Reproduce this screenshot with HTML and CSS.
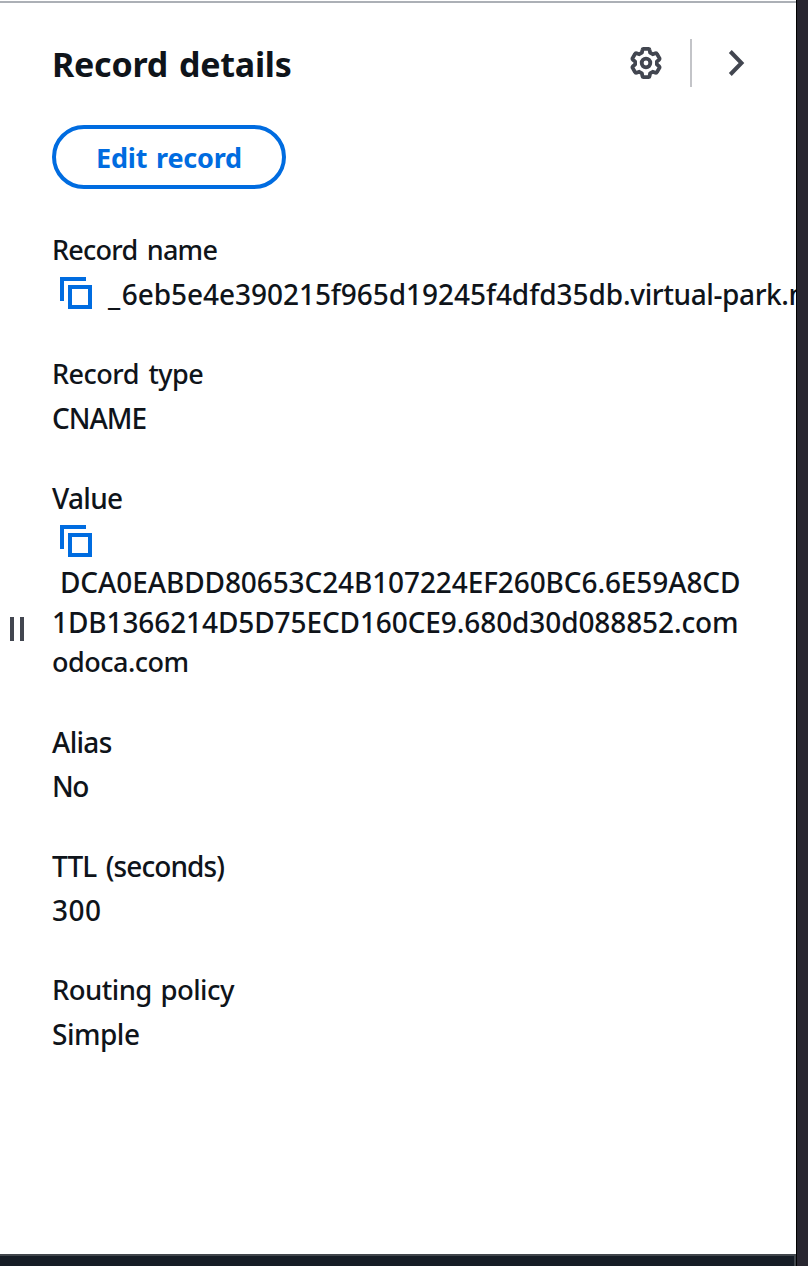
FILE: index.html
```
<!DOCTYPE html>
<html lang="en">
<head>
<meta charset="utf-8">
<title>Record details</title>
<link rel="stylesheet" href="styles.css">
</head>
<body>
<div class="screen">
  <div class="main">
    <aside class="panel">
      <div class="handle"><span class="grip"></span><span class="grip"></span></div>
      <div class="content">
        <header class="header">
          <h1 class="title">Record details</h1>
          <svg class="gear" viewBox="0 0 32 32"><path d="M13.4 1.9H18.6Q19.5 2 19.6 3L20.1 5.6 22.78 7.25 25.4 6.3Q26.5 6 27 7L29.4 11.1Q29.8 12 29.1 12.7L26.9 14.45V17.55L29.1 19.3Q29.8 20 29.4 20.9L27 25Q26.5 26 25.4 25.7L22.78 24.75 20.1 26.4 19.6 29Q19.5 30 18.6 30.1H13.4Q12.5 30 12.4 29L11.9 26.4 9.22 24.75 6.6 25.7Q5.5 26 5 25L2.6 20.9Q2.2 20 2.9 19.3L5.1 17.55V14.45L2.9 12.7Q2.2 12 2.6 11.1L5 7Q5.5 6 6.6 6.3L9.22 7.25 11.9 5.6 12.4 3Q12.5 2 13.4 1.9Z"/><circle cx="16" cy="16" r="4.3"/></svg>
          <span class="divider"></span>
          <svg class="chevron" viewBox="0 0 32 32"><path d="M10.3 4.5 21.5 16 10.3 27.5"/></svg>
        </header>
        <button class="edit">Edit record</button>
        <dl class="fields">
          <div class="field">
            <dt class="t-name">Record name</dt>
            <dd class="copyline"><svg class="copy" viewBox="0 0 32 32"><path d="M2 24V2H26"/><path d="M10 10H30V30H10Z"/></svg><span class="t-host"><span class="t-under">_</span>6eb5e4e390215f965d19245f4dfd35db<span class="t-domain">.virtual-park.n</span></span></dd>
          </div>
          <div class="field"><dt class="t-type">Record type</dt><dd class="t-cname">CNAME</dd></div>
          <div class="field">
            <dt class="t-value">Value</dt>
            <dd>
              <div class="copyline"><svg class="copy" viewBox="0 0 32 32"><path d="M2 24V2H26"/><path d="M10 10H30V30H10Z"/></svg></div>
              <div class="first t-v1">DCA0EABDD80653C24B107224EF260BC6.6E59A8CD</div>
              <div class="t-v2">1DB1366214D5D75ECD160CE9.680d30d088852.com</div>
              <div class="t-v3">odoca.com</div>
            </dd>
          </div>
          <div class="field"><dt class="t-alias">Alias</dt><dd class="t-no">No</dd></div>
          <div class="field"><dt class="t-ttl">TTL (seconds)</dt><dd class="t-300">300</dd></div>
          <div class="field"><dt class="t-routing">Routing policy</dt><dd class="t-simple">Simple</dd></div>
        </dl>
      </div>
    </aside>
    <footer class="footer"></footer>
  </div>
  <div class="edge"></div>
</div>
</body>
</html>
```
FILE: styles.css
```
* { box-sizing: border-box; }
body { margin: 0; background: #fff; color: #0f141a; font: 500 28px/40px "Noto Sans", "Open Sans", sans-serif; }
.screen { display: flex; width: 808px; height: 1266px; overflow: hidden; }
.main { display: flex; flex-direction: column; width: 796px; overflow: hidden; }
.panel { display: flex; flex: 1; margin-top: 1px; border-top: 2px solid #acb0b6; overflow: hidden; }
.handle { display: flex; gap: 6px; width: 52px; padding: 614px 0 0 10px; flex: none; }
.grip { width: 4px; height: 24px; background: #424650; }
.content { width: 692px; flex: none; padding-top: 36px; }
.header { display: flex; align-items: center; height: 48px; }
.title { margin: 0; padding-top: 2px; flex: 1; font-size: 34px; line-height: 48px; font-weight: 700; letter-spacing: -0.25px; word-spacing: 2.5px; white-space: nowrap; }
.gear, .chevron, .copy { display: block; flex: none; width: 32px; height: 32px; fill: none; stroke: #424650; stroke-width: 4; }
.gear { stroke-linejoin: round; stroke-width: 3.8; }
.divider { width: 2px; height: 48px; margin: 0 28px; background: #c3c4c8; }
.header .chevron { margin-right: -8px; }
.edit { display: block; width: 234px; height: 64px; margin: 38px 0 0; padding: 2px 0 0; border: 4px solid #006ce0; border-radius: 32px; background: #fff; color: #006ce0; font: 700 27px/40px "Noto Sans", "Open Sans", sans-serif; letter-spacing: -0.2px; word-spacing: 2px; }
.fields { display: flex; flex-direction: column; gap: 40px; margin: 41px 0 0; white-space: nowrap; }
.field dt { height: 40px; margin-bottom: 4px; }
.field dd { margin: 0; }
.copyline { display: flex; align-items: center; height: 40px; gap: 16px; }
.field .copyline { padding-left: 8px; }
.copy { stroke: #006ce0; margin-top: -2px; }
.first { padding-left: 8px; }
.t-name { font-size: 27px; letter-spacing: -0.75px; word-spacing: 3px; }
.t-host { letter-spacing: -0.04px; }
.t-under { letter-spacing: 1.5px; }
.t-domain { letter-spacing: -0.4px; }
.t-type { font-size: 27px; letter-spacing: -0.5px; word-spacing: 3px; }
.t-cname { letter-spacing: -1px; }
.t-value { letter-spacing: -0.7px; }
.t-v1 { letter-spacing: -0.1px; }
.t-v2 { letter-spacing: -0.1px; }
.t-v3 { font-size: 27px; letter-spacing: -0.5px; }
.t-alias { letter-spacing: -0.7px; }
.t-no { letter-spacing: -1.5px; }
.t-ttl { letter-spacing: -0.9px; word-spacing: 3px; }
.t-300 { letter-spacing: 0.5px; }
.t-routing { font-size: 27.5px; letter-spacing: -0.55px; word-spacing: 2px; }
.t-simple { letter-spacing: -0.5px; }
.footer { height: 12px; border-top: 2px solid #41464c; border-right: 2px solid #41464c; background: #161d26; }
.edge { width: 12px; border-left: 1px solid #000; background: #282630; }
```
